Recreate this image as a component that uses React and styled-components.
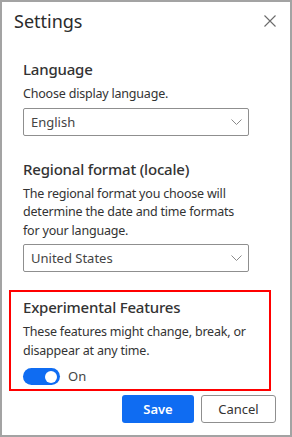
import React, { useState } from "react";
import styled, { createGlobalStyle } from "styled-components";

const GlobalStyle = createGlobalStyle`
  html, body {
    margin: 0;
    padding: 0;
    background: #ffffff;
  }
  * {
    box-sizing: border-box;
  }
`;

const FONT = `"Noto Sans", "Open Sans", Arial, sans-serif`;

export default function App() {
  const [enabled, setEnabled] = useState(true);

  return (
    <>
      <GlobalStyle />
      <Dialog>
        <Header>
          <Title>Settings</Title>
          <CloseButton aria-label="Close">
            <svg width="12" height="12" viewBox="0 0 12 12">
              <path d="M0.5 0.5 L11.5 11.5 M11.5 0.5 L0.5 11.5" stroke="#6b6b6b" strokeWidth="1.1" fill="none" />
            </svg>
          </CloseButton>
        </Header>

        <Content>
          <Section>
            <Label>Language</Label>
            <Description>Choose display language.</Description>
            <Select>
              <span>English</span>
              <Chevron />
            </Select>
          </Section>

          <Section>
            <Label>Regional format (locale)</Label>
            <Description>
              The regional format you choose will determine the date and time formats for your language.
            </Description>
            <Select>
              <span>United States</span>
              <Chevron />
            </Select>
          </Section>

          <Section highlighted>
            <Label>Experimental Features</Label>
            <Description>These features might change, break, or disappear at any time.</Description>
            <ToggleRow>
              <Toggle on={enabled} onClick={() => setEnabled(v => !v)}>
                <Knob />
              </Toggle>
              <ToggleText>{enabled ? "On" : "Off"}</ToggleText>
            </ToggleRow>
          </Section>
        </Content>

        <Footer>
          <PrimaryButton>Save</PrimaryButton>
          <SecondaryButton>Cancel</SecondaryButton>
        </Footer>
      </Dialog>
    </>
  );
}

function Chevron() {
  return (
    <svg width="11" height="6" viewBox="0 0 11 6">
      <path d="M0.5 0.5 L5.5 5.5 L10.5 0.5" stroke="#8a8a8a" strokeWidth="1" fill="none" />
    </svg>
  );
}

const Dialog = styled.div`
  width: 292px;
  height: 437px;
  border: 2px solid #a3a3a3;
  background: #ffffff;
  font-family: ${FONT};
  color: #333333;
  display: flex;
  flex-direction: column;
`;

const Header = styled.header`
  display: flex;
  align-items: center;
  justify-content: space-between;
  padding: 5px 14px 0 12px;
  height: 33px;
`;

const Title = styled.h1`
  margin: 0;
  font-size: 18px;
  font-weight: 400;
  line-height: 28px;
  color: #2b2b2b;
`;

const CloseButton = styled.button`
  border: none;
  background: transparent;
  padding: 0;
  width: 12px;
  height: 12px;
  display: flex;
  cursor: pointer;
`;

const Content = styled.div`
  display: flex;
  flex-direction: column;
  width: 262px;
  margin-left: 7px;
  padding-top: 24px;
`;

const Section = styled.section`
  display: flex;
  flex-direction: column;
  padding: ${p => (p.highlighted ? "5px 20px 4px 12px" : "0 22px 0 14px")};
  border: ${p => (p.highlighted ? "2px solid #ff0000" : "none")};
  margin: ${p => (p.highlighted ? "-5px 0 0" : "0 0 23px")};
`;

const Label = styled.h2`
  margin: 0 0 6px;
  font-size: 15px;
  font-weight: 500;
  letter-spacing: -0.2px;
  line-height: 20px;
  color: #333333;
`;

const Description = styled.p`
  margin: 0 0 4px;
  font-size: 12.5px;
  letter-spacing: -0.2px;
  line-height: 18.5px;
  color: #333333;
`;

const Select = styled.div`
  display: flex;
  align-items: center;
  justify-content: space-between;
  height: 28px;
  padding: 0 6px 0 7px;
  border: 1px solid #8f8f8f;
  border-radius: 2px;
  font-size: 13px;
  color: #444444;
`;

const ToggleRow = styled.div`
  display: flex;
  align-items: center;
  gap: 8px;
  height: 17px;
  margin-top: 4px;
`;

const Toggle = styled.button`
  width: 37px;
  height: 17px;
  border-radius: 9px;
  border: none;
  padding: 0 3px;
  display: flex;
  align-items: center;
  justify-content: ${p => (p.on ? "flex-end" : "flex-start")};
  background: ${p => (p.on ? "#0f6cf2" : "#c8c8c8")};
  cursor: pointer;
`;

const Knob = styled.span`
  width: 12px;
  height: 12px;
  border-radius: 50%;
  background: #ffffff;
`;

const ToggleText = styled.span`
  font-size: 13px;
  line-height: 17px;
  color: #444444;
`;

const Footer = styled.footer`
  display: flex;
  justify-content: flex-end;
  gap: 7px;
  padding: 4px 14px 0 0;
`;

const BaseButton = styled.button`
  height: 28px;
  border-radius: 3px;
  font-family: ${FONT};
  font-size: 13px;
  cursor: pointer;
`;

const PrimaryButton = styled(BaseButton)`
  width: 72px;
  border: none;
  background: #0f6cf2;
  color: #ffffff;
  font-weight: 600;
`;

const SecondaryButton = styled(BaseButton)`
  width: 75px;
  border: 1px solid #8f8f8f;
  background: #ffffff;
  color: #333333;
`;
